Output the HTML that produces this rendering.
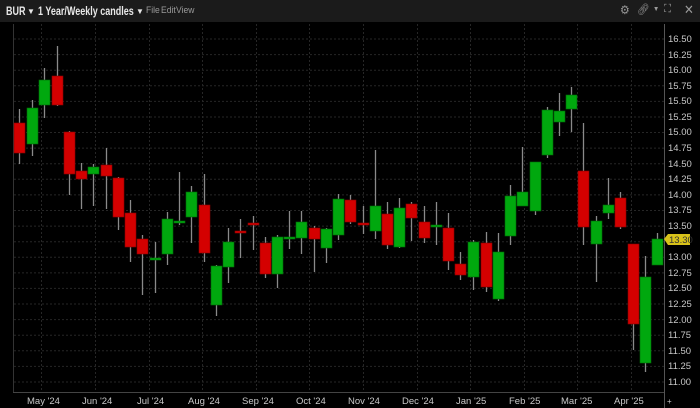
<!DOCTYPE html>
<html><head><meta charset="utf-8"><style>
html,body{margin:0;padding:0;background:#000;width:700px;height:408px;overflow:hidden;font-family:"Liberation Sans",sans-serif}
#hdr{position:absolute;left:0;top:0;width:700px;height:22px;background:#1b1b1b;color:#e8e8e8}
#hdr .t{position:absolute;top:4px;font-size:12px;font-weight:bold;transform:scaleX(0.75);transform-origin:left;white-space:nowrap}
#hdr .a{position:absolute;top:7px;font-size:8px}
#hdr .m{position:absolute;top:5px;font-size:9.5px;color:#9a9a9a;transform:scaleX(0.9);transform-origin:left}
svg{position:absolute;left:0;top:0}
</style></head><body>
<div id="hdr">
<span class="t" style="left:6px">BUR</span><span class="a" style="left:27px">▼</span>
<span class="t" style="left:38px">1 Year/Weekly candles</span><span class="a" style="left:136px">▼</span>
<span class="m" style="left:146px">File</span><span class="m" style="left:161px">Edit</span><span class="m" style="left:176px">View</span>
<span class="m" style="left:620px;top:3px;font-size:12px">⚙</span>
<span class="m" style="left:637px;top:3px;font-size:11px">🔗︎</span>
<span class="m" style="left:653px;top:6px;font-size:7px">▼</span>
<span class="m" style="left:664px;top:3px;font-size:11px">⛶</span>
<span class="m" style="left:684px;top:2px;font-size:13px">✕</span>
</div>
<svg id="c" width="700" height="408" style="top:0">
<rect x="0" y="22" width="700" height="386" fill="#000"/>
<g id="grid"></g>
<line x1="13.5" y1="24" x2="13.5" y2="392" stroke="#333"/>
<line x1="664.5" y1="24" x2="664.5" y2="408" stroke="#555"/>
<line x1="13" y1="392.5" x2="664" y2="392.5" stroke="#444"/>
<g id="cs"></g>
<g font-size="9.5" fill="#c8c8c8" font-family="Liberation Sans, sans-serif">
<text x="668" y="42">16.50</text><text x="668" y="58">16.25</text><text x="668" y="73">16.00</text><text x="668" y="89">15.75</text>
<text x="668" y="104">15.50</text><text x="668" y="120">15.25</text><text x="668" y="135">15.00</text><text x="668" y="151">14.75</text>
<text x="668" y="167">14.50</text><text x="668" y="182">14.25</text><text x="668" y="198">14.00</text><text x="668" y="213">13.75</text>
<text x="668" y="229">13.50</text><text x="668" y="260">13.00</text><text x="668" y="276">12.75</text>
<text x="668" y="291">12.50</text><text x="668" y="307">12.25</text><text x="668" y="323">12.00</text><text x="668" y="338">11.75</text>
<text x="668" y="354">11.50</text><text x="668" y="369">11.25</text><text x="668" y="385">11.00</text>
<text x="27" y="404">May '24</text><text x="82" y="404">Jun '24</text><text x="137" y="404">Jul '24</text><text x="188" y="404">Aug '24</text>
<text x="242" y="404">Sep '24</text><text x="296" y="404">Oct '24</text><text x="348" y="404">Nov '24</text><text x="402" y="404">Dec '24</text>
<text x="456" y="404">Jan '25</text><text x="509" y="404">Feb '25</text><text x="561" y="404">Mar '25</text><text x="614" y="404">Apr '25</text>
<text x="667" y="404" font-size="8">+</text>
</g>
<polygon points="664,239 668,234 690,234 690,245 668,245" fill="#d8c21a"/>
<text x="669" y="243" font-size="9.5" fill="#333" font-family="Liberation Sans, sans-serif">13.30</text>
</svg>
<script>
var g=document.getElementById('grid'),cs=document.getElementById('cs'),h='';
for(var i=0;i<=22;i++){var y=39+i*15.59;h+='<line x1="14" x2="664" y1="'+y.toFixed(1)+'" y2="'+y.toFixed(1)+'" stroke="#262626" stroke-dasharray="2,2"/>';}
[41,95,149,202,256,309,363,417,470,524,577,631].forEach(function(x){h+='<line y1="24" y2="392" x1="'+x+'.5" x2="'+x+'.5" stroke="#262626" stroke-dasharray="2,2"/>';});
g.innerHTML=h;
var d=[[19,'r',123,153,109,164],[32,'g',108,144,100,156],[44,'g',80,105,68,118],[57,'r',76,105,46,106],[69,'r',132,174,131,195],[81,'r',171,179,163,209],[93,'g',167,174,164,206],[106,'r',165,176,148,209],[118,'r',178,217,177,230],[130,'r',213,247,200,262],[142,'r',239,254,235,295],[155,'g',258,260,242,293],[167,'g',219,254,212,265],[179,'g',221,223,172,225],[191,'g',192,217,186,243],[204,'r',205,253,174,262],[216,'g',266,305,265,316],[228,'g',242,267,228,283],[240,'r',231,233,219,258],[253,'r',223,225,216,250],[265,'r',243,274,237,278],[277,'g',237,274,235,288],[289,'g',237,239,211,249],[301,'g',222,238,211,254],[314,'r',228,239,226,272],[326,'g',229,248,228,263],[338,'g',199,235,194,240],[350,'r',200,222,195,224],[363,'r',223,225,206,234],[375,'g',206,231,150,239],[387,'r',214,245,202,249],[399,'g',208,247,198,248],[411,'r',204,218,202,241],[424,'r',222,238,206,243],[436,'g',225,227,202,245],[448,'r',228,261,213,270],[460,'r',264,275,252,280],[473,'g',242,277,240,290],[486,'r',243,287,232,292],[498,'g',252,299,233,301],[510,'g',196,236,185,245],[522,'g',192,206,147,206],[535,'g',162,211,162,215],[547,'g',110,155,107,158],[559,'g',111,122,93,136],[571,'g',95,109,87,132],[583,'r',171,227,123,245],[596,'g',221,244,216,282],[608,'g',205,213,178,219],[620,'r',198,227,192,229],[633,'r',244,324,244,350],[645,'g',277,363,256,372],[657,'g',239,265,233,265]];
h='';d.forEach(function(c){var col=c[1]=='r'?'#d40000':'#00a80e',st=c[1]=='r'?'#8a0000':'#006a08';
h+='<line x1="'+c[0]+'.5" x2="'+c[0]+'.5" y1="'+c[4]+'" y2="'+c[5]+'" stroke="#8a8a8a" stroke-width="1.3"/>';
h+='<rect x="'+(c[0]-5)+'" y="'+c[2]+'" width="11" height="'+Math.max(2,c[3]-c[2])+'" fill="'+col+'" stroke="'+st+'" stroke-width="0.6"/>';});
cs.innerHTML=h;
</script>
</body></html>
